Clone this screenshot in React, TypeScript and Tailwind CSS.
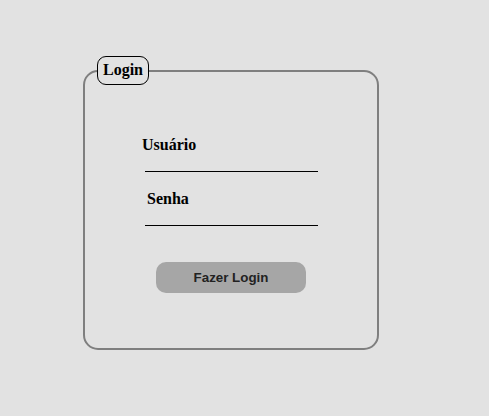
export default function App() {
  return (
    <div className="min-h-screen w-full bg-[#e2e2e2] pt-[56px] pl-[83px]">
      <form onSubmit={(e) => e.preventDefault()}>
        <fieldset className="w-[296px] rounded-[15px] border-2 border-[#7f7f7f] px-3 pb-[55px] pt-0">
          <legend className="h-[29px] rounded-[9px] border border-black bg-[#e2e2e2] px-[5px] font-['Liberation_Serif',serif] text-[16px] font-bold leading-[26px] text-black">
            Login
          </legend>
          <label className="ml-[45px] mt-[51px] block font-['Liberation_Serif',serif] text-[16px] font-bold leading-[18px] text-black">
            Usuário
          </label>
          <input
            type="text"
            className="ml-[48px] block h-[18px] w-[173px] border-b border-black bg-transparent outline-none"
          />
          <label className="ml-[50px] mt-[18px] block font-['Liberation_Serif',serif] text-[16px] font-bold leading-[18px] text-black">
            Senha
          </label>
          <input
            type="password"
            className="ml-[48px] block h-[18px] w-[173px] border-b border-black bg-transparent outline-none"
          />
          <button
            type="submit"
            className="ml-[59px] mt-[36px] block h-[31px] w-[150px] rounded-[10px] bg-[#a6a6a6] font-['Liberation_Sans',Arial,sans-serif] text-[13.33px] font-bold text-[#222]"
          >
            Fazer Login
          </button>
        </fieldset>
      </form>
    </div>
  );
}
